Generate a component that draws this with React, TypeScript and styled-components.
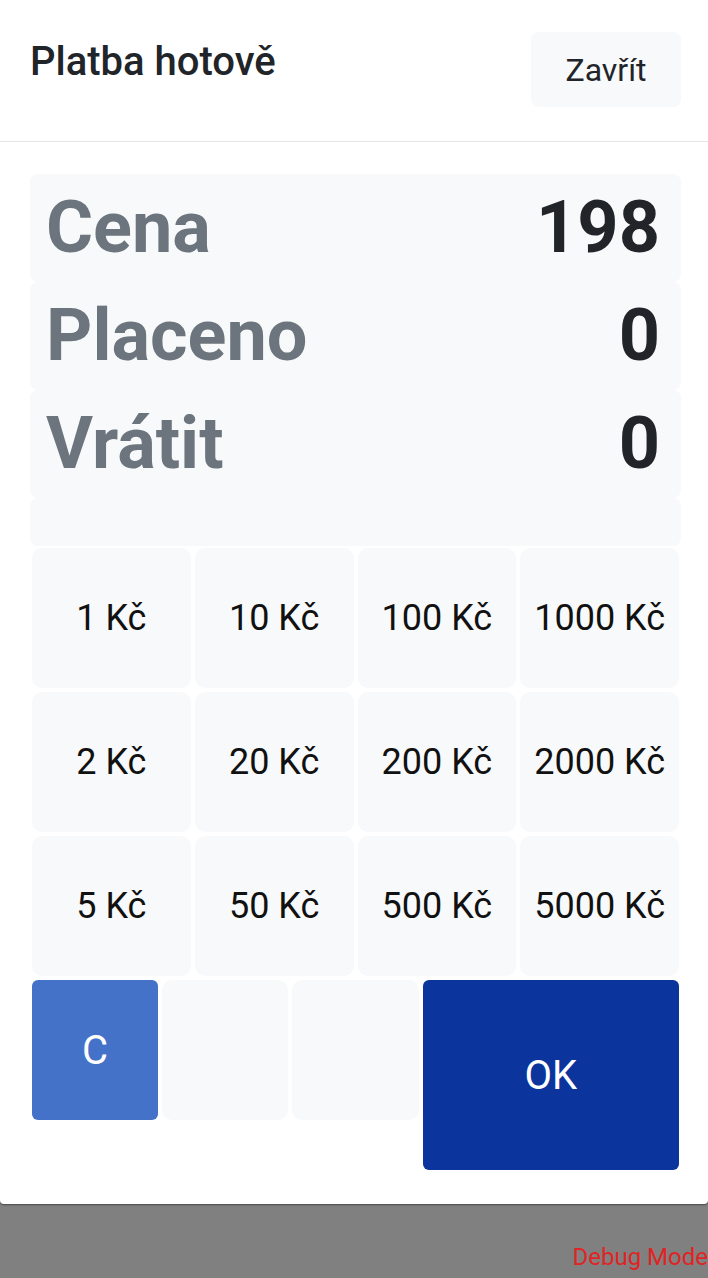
import React from "react";
import styled, { createGlobalStyle } from "styled-components";

const Global = createGlobalStyle`
  html, body {
    margin: 0;
    padding: 0;
    background: #808080;
    font-family: Roboto, "Liberation Sans", Arial, sans-serif;
    color: #212529;
  }
  * { box-sizing: border-box; }
`;

const Modal = styled.div`
  background: #fff;
  width: 100%;
  border-radius: 0 0 4px 4px;
  box-shadow: 0 1px 2px rgba(0, 0, 0, 0.45);
`;

const Header = styled.div`
  display: flex;
  justify-content: space-between;
  align-items: flex-start;
  padding: 32px 27px 34px 30px;
  border-bottom: 1px solid #e4e6e8;
`;

const Title = styled.h5`
  margin: 0;
  font-size: 40px;
  line-height: 60px;
  font-weight: 500;
  color: #212529;
`;

const CloseButton = styled.button`
  width: 150px;
  height: 75px;
  border: none;
  border-radius: 8px;
  background: #f8f9fa;
  font-family: inherit;
  font-size: 32px;
  line-height: 48px;
  color: #212529;
  padding: 0;
`;

const Body = styled.div`
  padding: 32px 27px 32px 30px;
`;

const SummaryRow = styled.div`
  display: flex;
  justify-content: space-between;
  align-items: center;
  height: 108px;
  padding: 0 21px 0 16px;
  background: #f8f9fa;
  border-radius: 8px;
  font-size: 72px;
  line-height: 108px;
  font-weight: 700;
`;

const Label = styled.span`
  color: #6c757d;
`;

const Value = styled.span`
  color: #212529;
`;

const InputRow = styled.div`
  height: 48px;
  background: #f8f9fa;
  border-radius: 8px;
`;

const Keypad = styled.div`
  display: grid;
  grid-template-columns: repeat(4, 1fr);
`;

const CoinButton = styled.button`
  margin: 2px;
  height: 140px;
  border: none;
  border-radius: 10px;
  background: #f8f9fa;
  font-family: inherit;
  font-size: 36px;
  color: #111;
  padding: 0;
`;

const ActionRow = styled.div`
  display: grid;
  grid-template-columns: repeat(5, 1fr);
  align-items: start;
`;

const ActionButton = styled.button<{ $variant: "clear" | "blank" | "ok" }>`
  margin: 2px;
  height: ${(p) => (p.$variant === "ok" ? "190px" : "140px")};
  grid-column: ${(p) => (p.$variant === "ok" ? "span 2" : "span 1")};
  border: none;
  border-radius: ${(p) => (p.$variant === "blank" ? "10px" : "6px")};
  background: ${(p) =>
    p.$variant === "clear" ? "#4472c9" : p.$variant === "ok" ? "#0b359d" : "#f8f9fa"};
  color: #fff;
  font-family: inherit;
  font-size: 40px;
  padding: 0;
`;

const Footer = styled.div`
  height: 74px;
  display: flex;
  justify-content: flex-end;
  align-items: flex-end;
  padding-bottom: 9px;
`;

const Debug = styled.span`
  color: #e02424;
  font-size: 24px;
  line-height: 24px;
  white-space: nowrap;
`;

const coins = [1, 10, 100, 1000, 2, 20, 200, 2000, 5, 50, 500, 5000];

export default function App() {
  return (
    <>
      <Global />
      <Modal>
        <Header>
          <Title>Platba hotově</Title>
          <CloseButton>Zavřít</CloseButton>
        </Header>
        <Body>
          <SummaryRow>
            <Label>Cena</Label>
            <Value>198</Value>
          </SummaryRow>
          <SummaryRow>
            <Label>Placeno</Label>
            <Value>0</Value>
          </SummaryRow>
          <SummaryRow>
            <Label>Vrátit</Label>
            <Value>0</Value>
          </SummaryRow>
          <InputRow />
          <Keypad>
            {coins.map((c) => (
              <CoinButton key={c}>{c} Kč</CoinButton>
            ))}
          </Keypad>
          <ActionRow>
            <ActionButton $variant="clear">C</ActionButton>
            <ActionButton $variant="blank" />
            <ActionButton $variant="blank" />
            <ActionButton $variant="ok">OK</ActionButton>
          </ActionRow>
        </Body>
      </Modal>
      <Footer>
        <Debug>Debug Mode</Debug>
      </Footer>
    </>
  );
}
